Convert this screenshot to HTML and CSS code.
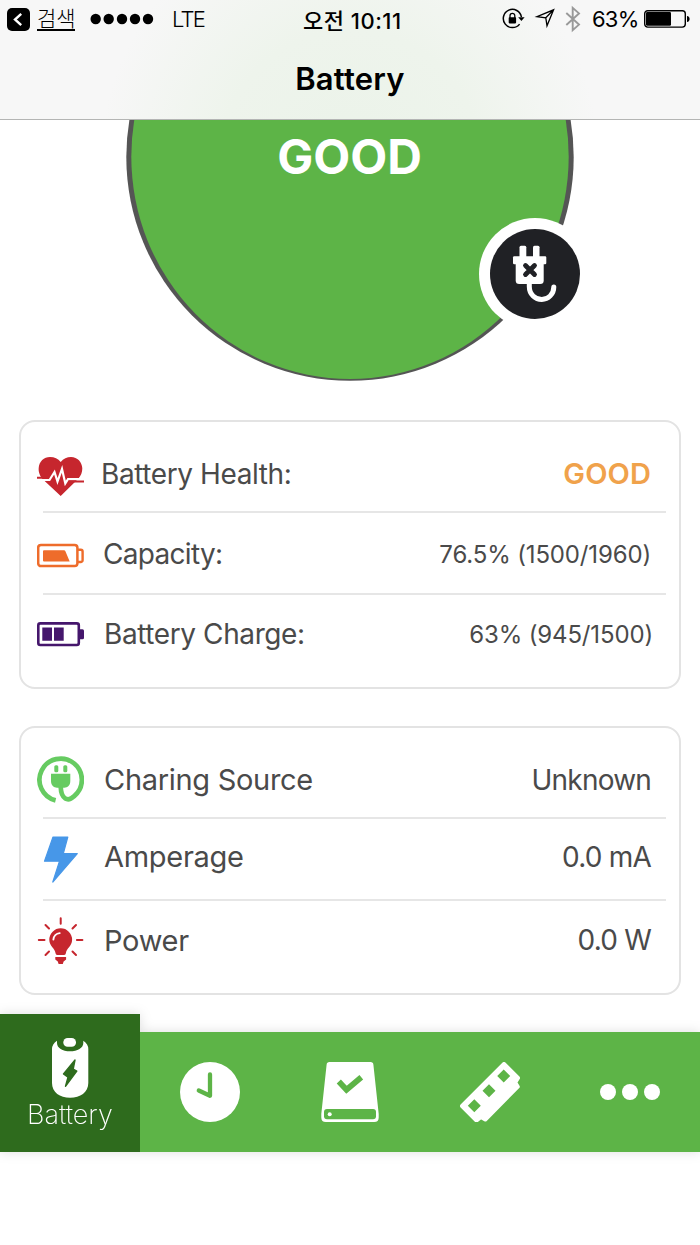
FILE: index.html
```html
<!DOCTYPE html>
<html lang="ko">
<head>
    <meta charset="UTF-8">
    <title>Battery</title>
    <link rel="stylesheet" href="styles.css">
</head>
<body>

<header class="header">
    <div class="status">
        <div class="status-left">
            <svg class="back" viewBox="0 0 23 23"><rect width="23" height="23" rx="5"/><path d="M14.2 5.8L8 11.5l6.2 5.7" fill="none" stroke="#fff" stroke-width="2.4"/></svg>
            <span class="search">검색</span>
            <svg class="signal" viewBox="0 0 64 12"><circle cx="5.7" cy="6" r="5.2"/><circle cx="18.7" cy="6" r="5.2"/><circle cx="32" cy="6" r="5.2"/><circle cx="45" cy="6" r="5.2"/><circle cx="58" cy="6" r="5.2"/></svg>
            <span class="lte">LTE</span>
        </div>
        <span class="time">오전 10:11</span>
        <div class="status-right">
            <svg class="status-icons" viewBox="0 0 80 38">
                <path d="M17.6 24.1A9.1 9.1 0 1 1 19.4 17" fill="none" stroke="#000" stroke-width="1.5"/>
                <path d="M16.2 17.2h6.4l-3.2 3.8z"/>
                <rect x="6.7" y="17.2" width="7.4" height="6.2" rx=".8"/>
                <path d="M8 18v-2.3a2.4 2.4 0 0 1 4.8 0V18" fill="none" stroke="#000" stroke-width="1.3"/>
                <path d="M51.6 9.8L45 25.8l-1.2-8-8.8-1.2zM51.6 9.8l-7.8 8" fill="none" stroke="#000" stroke-width="1.3"/>
                <path d="M64.3 13L77 24.6l-6.3 5.6V7.8l6.3 5.6L64.3 25" fill="none" stroke="#999" stroke-width="1.9"/>
            </svg>
            <span class="percent">63%</span>
            <svg class="level" viewBox="0 0 46 18">
                <rect x=".7" y=".7" width="40.6" height="16.4" rx="3" fill="none" stroke="#000" stroke-width="1.4"/>
                <rect x="2" y="2" width="25" height="13.8" rx="1.2"/>
                <path d="M43 6c3.5 0 3.5 6 0 6z"/>
            </svg>
        </div>
    </div>
    <h1 class="title">Battery</h1>
</header>

<div class="gauge">
    <svg viewBox="0 0 700 300">
        <circle cx="350" cy="37" r="223.7" fill="#555"/>
        <ellipse cx="350" cy="36.5" rx="218.7" ry="222.5" fill="#5db447"/>
        <text class="gauge-text" x="349.5" y="54" text-anchor="middle">GOOD</text>
        <circle cx="535" cy="154" r="56" fill="#fff"/>
        <circle cx="535" cy="154" r="45" fill="#202125"/>
        <g fill="#fff">
            <rect x="519.5" y="125.7" width="6.8" height="14" rx="1.5"/>
            <rect x="533" y="125.7" width="6.5" height="14" rx="1.5"/>
            <rect x="513" y="136.3" width="33.3" height="8" rx="1.2"/>
            <path d="M515.7 142h28v18.5a3.5 3.5 0 0 1-3.5 3.5h-21a3.5 3.5 0 0 1-3.5-3.5z"/>
        </g>
        <path d="M529.3 162v4.5c0 8 6 13 12.5 13s12-5.5 12-12.5" fill="none" stroke="#fff" stroke-width="5" stroke-linecap="round"/>
        <path d="M525.5 145.5l9 9M534.5 145.5l-9 9" stroke="#202125" stroke-width="4.8" stroke-linecap="round"/>
    </svg>
</div>

<section class="card">
    <div class="row first health">
        <svg class="icon" viewBox="0 0 47 47">
            <path d="M23.7 46L5.5 29C1.7 24.5 1.5 20 1.7 18 2 11.5 7 7 13 7c4.5 0 8 1.7 10.7 5C26.4 8.7 30 7 34 7c6.5 0 11 5 11.3 11.3 0 4-1.3 7.7-4.3 10.7z" fill="#c6262e"/>
            <path d="M2 30h10.500l5-8 3 9.500L25 19l3.300 14.500 2.700-4.300h13" fill="none" stroke="#fff" stroke-width="2.2"/>
            <path d="M0 27.7h11M31.5 31.5H47" stroke="#c6262e" stroke-width="1.9"/>
        </svg>
        <span class="label">Battery Health:</span>
        <span class="value good">GOOD</span>
    </div>
    <div class="line"></div>
    <div class="row capacity">
        <svg class="icon" viewBox="0 0 47 47" fill="#ee6c2b">
            <rect x="1.2" y="13.9" width="39.2" height="21.200" rx="2.800" fill="none" stroke="#ee6c2b" stroke-width="2.5"/>
            <path d="M41 18.7h2.8a1.8 1.8 0 0 1 1.8 1.8v8.7a1.8 1.8 0 0 1-1.8 1.8H41" fill="none" stroke="#ee6c2b" stroke-width="2.4"/>
            <path d="M7 19.2h20q1 0 1.4 1l4.3 10.300H7q-1 0-1-1v-9.300q0-1 1-1z"/>
        </svg>
        <span class="label">Capacity:</span>
        <span class="value small">76.5% (1500/1960)</span>
    </div>
    <div class="line"></div>
    <div class="row last charge">
        <svg class="icon" viewBox="0 0 47 47" fill="#45166c">
            <rect x="1.3" y="12.4" width="40.5" height="21.6" rx="2" fill="none" stroke="#45166c" stroke-width="2.6"/>
            <path d="M42.5 18.2h3q1.5 0 1.5 1.5v7q0 1.5-1.5 1.5h-3z"/>
            <path d="M5.3 16.5H15v13.3H5.3zM17 16.5h9.7v13.3H17z"/>
        </svg>
        <span class="label">Battery Charge:</span>
        <span class="value small">63% (945/1500)</span>
    </div>
</section>

<section class="card power-card">
    <div class="row first source">
        <svg class="icon" viewBox="0 0 47 47" fill="#66cb61">
            <path d="M18.6 44.4A21.2 21.2 0 1 1 37 40.3C31 46 24.200 43.5 23.700 31" fill="none" stroke="#66cb61" stroke-width="4.7"/>
            <rect x="17.3" y="9.3" width="4" height="7" rx="1.5"/>
            <rect x="26.3" y="9.3" width="4" height="7" rx="1.5"/>
            <path d="M14 17.7h19.3V25c0 4.5-2.8 6.7-6 6.7h-7.3c-3.2 0-6-2.2-6-6.7z"/>
        </svg>
        <span class="label">Charing Source</span>
        <span class="value">Unknown</span>
    </div>
    <div class="line"></div>
    <div class="row amperage">
        <svg class="icon" viewBox="0 0 47 47">
            <path d="M16 1h14.8L26.3 17.7h14L15.8 46l6.7-20.8H7.5z" fill="#4797e8" stroke="#4797e8" stroke-width="1.2" stroke-linejoin="round"/>
        </svg>
        <span class="label">Amperage</span>
        <span class="value">0.0 mA</span>
    </div>
    <div class="line"></div>
    <div class="row last power">
        <svg class="icon" viewBox="0 0 47 47" fill="#c6262e">
            <path d="M23.7 1.3v5.5M1.8 23H7.5M39.9 23h5.5M8.5 8l3.5 3.5M39 8l-3.5 3.5M8.5 38l3.5-3.5M39 38l-3.5-3.5" stroke="#c6262e" stroke-width="2" stroke-linecap="round"/>
            <path d="M23.7 11.3a11.4 11.4 0 0 0-11.4 11.4c0 6.3 5.5 8.3 6.2 13.3.2 1.3.7 2 1.8 2h6.8c1.1 0 1.6-.7 1.8-2 .7-5 6.2-7 6.2-13.3a11.4 11.4 0 0 0-11.4-11.4z"/>
            <path d="M18.3 40h10.8v2.5l-2.5 2-.8 2.5h-4.2l-.8-2.5-2.5-2z"/>
            <path d="M16.4 22.5a7 7 0 0 1 6.3-6.4" fill="none" stroke="#fff" stroke-width="1.9" stroke-linecap="round"/>
        </svg>
        <span class="label">Power</span>
        <span class="value">0.0 W</span>
    </div>
</section>

<nav class="tabs">
    <a class="tab active">
        <svg viewBox="0 0 60 60">
            <path d="M17 2.7Q12 6 12 11v34c0 9.5 8 14.7 18.1 14.7S48.3 54.5 48.3 45V11q0-5-5-8.3V5C43.3 10 37.5 13.3 30 13.3S17 10 17 5z" fill="#fff"/>
            <rect x="23.3" y="0" width="12.7" height="8.7" rx="4.3" fill="#fff"/>
            <path d="M35 22l-1.8 9.2 3.600 2L25.500 48.300l2.500-9.200-4.500-3.200z" fill="#2e6b1d" stroke="#2e6b1d" stroke-width="1.4" stroke-linejoin="round"/>
        </svg>
        <span class="tab-text">Battery</span>
    </a>
    <a class="tab">
        <svg viewBox="0 0 60 60"><circle cx="30" cy="30" r="30" fill="#fff"/><path d="M30 12.5v21.3L18.8 28.5" fill="none" stroke="#5db447" stroke-width="4.3" stroke-linecap="round" stroke-linejoin="round"/></svg>
    </a>
    <a class="tab">
        <svg viewBox="0 0 60 60">
            <path d="M9.5 0h41q2.7 0 2.9 2.7L58.7 52v3.5q0 4.5-4.5 4.5H5.800q-4.500 0-4.500-4.500V52L6.600 2.700Q6.800 0 9.500 0z" fill="#fff"/>
            <rect x="4" y="47" width="52" height="10.3" rx="3" fill="#5db447"/>
            <circle cx="9.7" cy="52.2" r="2" fill="#fff"/>
            <path d="M18.8 19.5l7.7 8.3 14.8-12.5" fill="none" stroke="#5db447" stroke-width="5.7"/>
        </svg>
    </a>
    <a class="tab">
        <svg viewBox="0 0 60 60">
            <path d="M44 2l14 14-2.8 4.5 2.6 4.2-32.5 32.8-4.3-2.5L16.500 58.500 2 44z" fill="#fff" stroke="#fff" stroke-width="4" stroke-linejoin="round"/>
            <path d="M14.3 37.2l6.5 6.5-6.5 6.5-6.5-6.5zM29 22.3l6.5 6.5-6.5 6.5-6.5-6.5zM43.7 7.5l6.5 6.5-6.5 6.5-6.5-6.5z" fill="#5db447"/>
        </svg>
    </a>
    <a class="tab">
        <svg viewBox="0 0 60 60" fill="#fff"><circle cx="8" cy="30" r="8"/><circle cx="30" cy="30" r="8"/><circle cx="52" cy="30" r="8"/></svg>
    </a>
</nav>

</body>
</html>
```
FILE: styles.css
```css
*{
    margin: 0;
    padding: 0;
    box-sizing: border-box;
}
body{
    width: 700px;
    height: 1245px;
    overflow: hidden;
    background-color: #fff;
    color: #4a4a4a;
    font-family: Inter, "Noto Sans CJK KR", sans-serif;
}
svg{
    display: block;
    flex-shrink: 0;
}
span{
    white-space: nowrap;
}

/* header */
.header{
    height: 120px;
    border-bottom: 1px solid #b4b5b4;
    background: radial-gradient(circle at 350px 160px, #ebf3e9 0, #eef4ec 130px, #f7f7f7 250px);
    color: #000;
}
.status{
    display: grid;
    grid-template-columns: 303px 99px 1fr;
    align-items: center;
    height: 38px;
    font-size: 22px;
}
.status-left,.status-right{
    display: flex;
    align-items: center;
}
.back{
    width: 23px;
    height: 23px;
    margin-left: 7px;
}
.search{
    width: 38px;
    height: 23px;
    margin: 0 0 0 7px;
    border-bottom: 2px solid #000;
    font-size: 21px;
    font-weight: 300;
    line-height: 21px;
}
.signal{
    width: 64px;
    height: 12px;
    margin-left: 15px;
}
.lte{
    margin-left: 18px;
    font-weight: 300;
    letter-spacing: -1.8px;
}
.time{
    font-size: 22px;
    font-weight: 500;
    letter-spacing: 0.5px;
}
.status-icons{
    width: 80px;
    height: 38px;
    margin-left: 100px;
}
.percent{
    width: 51px;
    padding-left: 10px;
    letter-spacing: -0.8px;
}
.level{
    width: 46px;
    height: 18px;
    margin-left: 11px;
}
.title{
    padding-top: 22px;
    font-size: 31px;
    font-weight: 600;
    letter-spacing: 0.2px;
    line-height: 38px;
    text-align: center;
}

/* gauge */
.gauge{
    height: 300px;
}
.gauge-text{
    fill: #fff;
    font-size: 48px;
    font-weight: 700;
}

/* cards */
.card{
    width: 662px;
    height: 269px;
    margin: 0 0 37px 19px;
    border: 2px solid #e3e3e3;
    border-radius: 16px;
}
.row{
    display: flex;
    align-items: center;
    height: 80px;
    padding: 2px 28px 0 16px;
    font-size: 28px;
}
.row.first{
    height: 89px;
    padding-top: 14px;
}
.row.last{
    height: 92px;
    padding-top: 0;
    padding-bottom: 14px;
}
.line{
    height: 2px;
    margin: 0 13px 0 22px;
    background-color: #e6e6e6;
}
.icon{
    width: 47px;
    height: 47px;
}
.label{
    margin-left: 20px;
    letter-spacing: -0.4px;
}
.value{
    margin-left: auto;
    letter-spacing: -0.8px;
}
.value.small{
    font-size: 24px;
    letter-spacing: -0.15px;
}
.value.good{
    color: #f0a24b;
    font-size: 29px;
    font-weight: 600;
    letter-spacing: 0.1px;
}
.health .label{
    margin-left: 17px;
}
.capacity .label{
    margin-left: 19px;
    letter-spacing: -0.7px;
}
.charge .value{
    margin-right: -2px;
}
.power-card .label{
    font-size: 29px;
    letter-spacing: -0.3px;
}
.row.amperage{
    padding-top: 0;
}
.amperage span{
    padding-bottom: 5px;
}

/* bottom tabs */
.tabs{
    display: flex;
    align-items: flex-end;
    height: 138px;
    margin-top: -18px;
    filter: drop-shadow(0 0 6px rgba(0, 0, 0, 0.13));
}
.tab{
    display: flex;
    flex-direction: column;
    align-items: center;
    justify-content: center;
    width: 140px;
    height: 120px;
    background-color: #5db447;
}
.tab.active{
    justify-content: flex-start;
    height: 138px;
    padding-top: 24px;
    background-color: #2e6b1d;
}
.tab svg{
    width: 60px;
    height: 60px;
}
.tab-text{
    color: #fff;
    font-size: 27px;
    font-weight: 200;
    line-height: 34px;
}
```
